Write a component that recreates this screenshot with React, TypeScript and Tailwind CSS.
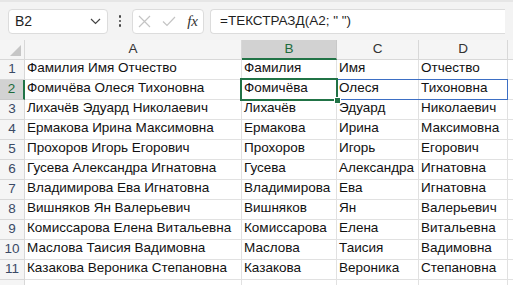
import React from 'react';

const rows: [string, string, string, string][] = [
  ['Фамилия Имя Отчество', 'Фамилия', 'Имя', 'Отчество'],
  ['Фомичёва Олеся Тихоновна', 'Фомичёва', 'Олеся', 'Тихоновна'],
  ['Лихачёв Эдуард Николаевич', 'Лихачёв', 'Эдуард', 'Николаевич'],
  ['Ермакова Ирина Максимовна', 'Ермакова', 'Ирина', 'Максимовна'],
  ['Прохоров Игорь Егорович', 'Прохоров', 'Игорь', 'Егорович'],
  ['Гусева Александра Игнатовна', 'Гусева', 'Александра', 'Игнатовна'],
  ['Владимирова Ева Игнатовна', 'Владимирова', 'Ева', 'Игнатовна'],
  ['Вишняков Ян Валерьевич', 'Вишняков', 'Ян', 'Валерьевич'],
  ['Комиссарова Елена Витальевна', 'Комиссарова', 'Елена', 'Витальевна'],
  ['Маслова Таисия Вадимовна', 'Маслова', 'Таисия', 'Вадимовна'],
  ['Казакова Вероника Степановна', 'Казакова', 'Вероника', 'Степановна'],
];

const widths = ['w-[217px]', 'w-[95px]', 'w-[82px]', 'w-[89px]'];

function Toolbar() {
  return (
    <div className="h-[40px] bg-[#f3f3f3] border-t-2 border-[#e6e6e6] flex items-center px-[8px] gap-[6px]">
      <div className="w-[100px] h-[25px] bg-white border border-[#dcdcdc] rounded-[4px] flex items-center justify-between pl-[6px] pr-[6px] text-[14px] text-[#1f1f1f]">
        <span>B2</span>
        <svg width="11" height="7" viewBox="0 0 11 7" fill="none" stroke="#444" strokeWidth="1.2">
          <path d="M1 1 L5.5 5.5 L10 1" />
        </svg>
      </div>
      <div className="w-[12px] flex flex-col items-center gap-[2px]">
        <span className="w-[2.5px] h-[2.5px] bg-[#444] rounded-full" />
        <span className="w-[2.5px] h-[2.5px] bg-[#444] rounded-full" />
        <span className="w-[2.5px] h-[2.5px] bg-[#444] rounded-full" />
      </div>
      <div className="w-[72px] h-[25px] bg-white border border-[#dcdcdc] rounded-[4px] flex items-center justify-between px-[5px]">
        <svg width="13" height="13" viewBox="0 0 13 13" stroke="#c4c4c4" strokeWidth="1.2">
          <path d="M1 1 L12 12 M12 1 L1 12" />
        </svg>
        <svg width="14" height="11" viewBox="0 0 14 11" fill="none" stroke="#c4c4c4" strokeWidth="1.2">
          <path d="M1 5.5 L5 9.5 L13 1" />
        </svg>
        <span className="text-[15px] italic text-[#333] leading-none" style={{ fontFamily: '"Liberation Serif", serif' }}>
          fx
        </span>
      </div>
      <div className="flex-1 h-[25px] bg-white border border-[#dcdcdc] rounded-l-[4px] border-r-0 flex items-center pl-[9px] text-[13.5px] text-[#1f1f1f]">
        =ТЕКСТРАЗД(A2; " ")
      </div>
    </div>
  );
}

function ColHeader() {
  const cols = ['A', 'B', 'C', 'D'];
  return (
    <div className="flex h-[20px] bg-[#f5f5f5]">
      <div className="w-[25px] border-r border-b border-[#d8d8d8] relative">
        <svg className="absolute right-[3px] bottom-[3px]" width="11" height="11" viewBox="0 0 11 11">
          <path d="M11 0 L11 11 L0 11 Z" fill="#c6c6c6" />
        </svg>
      </div>
      {cols.map((c, i) =>
        c === 'B' ? (
          <div
            key={c}
            className={`${widths[i]} bg-[#d2d2d2] border-r border-[#c8c8c8] border-b-2 border-b-[#217346] flex items-center justify-center text-[13.5px] text-[#1d6b3c] pt-[1px]`}
          >
            {c}
          </div>
        ) : (
          <div
            key={c}
            className={`${widths[i]} border-r border-b border-[#d8d8d8] flex items-center justify-center text-[13.5px] text-[#333]`}
          >
            {c}
          </div>
        )
      )}
      <div className="flex-1 border-b border-[#d8d8d8]" />
    </div>
  );
}

function Row({ n, cells }: { n: number; cells: string[] }) {
  const sel = n === 2;
  return (
    <div className="flex h-[20px]">
      <div
        className={
          sel
            ? 'w-[25px] bg-[#d2d2d2] border-r-2 border-r-[#217346] border-b border-[#c8c8c8] flex items-center justify-center text-[13.5px] text-[#1d6b3c]'
            : 'w-[25px] bg-[#f5f5f5] border-r border-b border-[#d8d8d8] flex items-center justify-center text-[13.5px] text-[#3a4a66]'
        }
      >
        {n}
      </div>
      {cells.map((t, i) => (
        <div
          key={i}
          className={`${widths[i]} border-r border-b border-[#e1e1e1] flex items-end pb-[1px] pl-[2px] text-[13.5px] text-[#111] whitespace-nowrap overflow-visible`}
        >
          {t}
        </div>
      ))}
      <div className="flex-1 border-b border-[#e1e1e1]" />
    </div>
  );
}

export default function App() {
  return (
    <div
      className="w-[513px] h-[285px] overflow-hidden bg-white relative"
      style={{ fontFamily: '"Liberation Sans", Arial, sans-serif' }}
    >
      <Toolbar />
      <ColHeader />
      {rows.map((r, i) => (
        <Row key={i} n={i + 1} cells={r} />
      ))}
      <div className="flex h-[20px]">
        <div className="w-[25px] bg-[#f5f5f5] border-r border-[#d8d8d8]" />
        <div className="w-[217px] border-r border-[#e1e1e1]" />
        <div className="w-[95px] border-r border-[#e1e1e1]" />
        <div className="w-[82px] border-r border-[#e1e1e1]" />
        <div className="w-[89px] border-r border-[#e1e1e1]" />
      </div>
      {/* spill range outline */}
      <div className="absolute left-[241px] top-[79px] w-[267px] h-[21px] border border-[#3d6fc4] pointer-events-none" />
      {/* active cell */}
      <div className="absolute left-[240px] top-[78px] w-[98px] h-[23px] border-2 border-[#217346] pointer-events-none" />
      <div className="absolute left-[334px] top-[97px] w-[5px] h-[5px] bg-[#217346] border border-white box-content pointer-events-none" />
    </div>
  );
}
